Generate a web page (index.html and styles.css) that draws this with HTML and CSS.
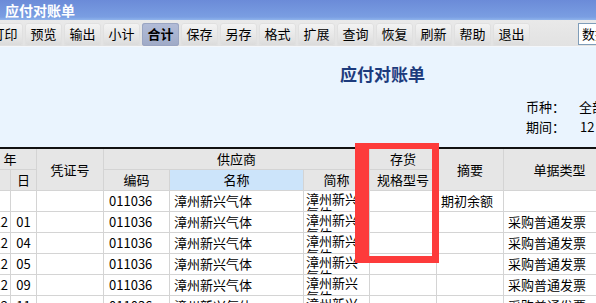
FILE: index.html
```html
<!DOCTYPE HTML>
<html>
<head>
	<title>应付对账单</title>
	<link rel="stylesheet" href="styles.css">
</head>
<body>
	<div class="titlebar">应付对账单</div>
	<div class="toolbar">
		<span class="tool first">打印</span>
		<span class="tool">预览</span>
		<span class="tool">输出</span>
		<span class="tool">小计</span>
		<span class="tool active">合计</span>
		<span class="tool">保存</span>
		<span class="tool">另存</span>
		<span class="tool">格式</span>
		<span class="tool">扩展</span>
		<span class="tool">查询</span>
		<span class="tool">恢复</span>
		<span class="tool">刷新</span>
		<span class="tool">帮助</span>
		<span class="tool">退出</span>
		<div class="search">数据权限</div>
	</div>
	<div class="report">
		<div class="report-head">
			<h1 class="report-title">应付对账单</h1>
			<dl class="meta">
				<dt>币种：</dt><dd>全部</dd>
				<dt>期间：</dt><dd class="num">12</dd>
			</dl>
		</div>
		<table class="grid">
			<colgroup>
				<col class="c-month"><col class="c-day"><col class="c-voucher"><col class="c-code">
				<col class="c-name"><col class="c-short"><col class="c-spec"><col class="c-summary"><col class="c-type">
			</colgroup>
			<thead>
				<tr>
					<th colspan="2">年</th>
					<th rowspan="2" class="tall">凭证号</th>
					<th colspan="3">供应商</th>
					<th>存货</th>
					<th rowspan="2" class="tall">摘要</th>
					<th rowspan="2" class="tall">单据类型</th>
				</tr>
				<tr>
					<th></th>
					<th>日</th>
					<th>编码</th>
					<th class="picked">名称</th>
					<th>简称</th>
					<th>规格型号</th>
				</tr>
			</thead>
			<tbody>
				<tr>
					<td></td><td></td><td></td>
					<td class="num">011036</td><td>漳州新兴气体</td>
					<td class="wrap"><div>漳州新兴气体</div></td>
					<td></td><td>期初余额</td><td></td>
				</tr>
				<tr>
					<td class="num month">12</td><td class="num day">01</td><td></td>
					<td class="num">011036</td><td>漳州新兴气体</td>
					<td class="wrap"><div>漳州新兴气体</div></td>
					<td></td><td></td><td>采购普通发票</td>
				</tr>
				<tr>
					<td class="num month">12</td><td class="num day">04</td><td></td>
					<td class="num">011036</td><td>漳州新兴气体</td>
					<td class="wrap"><div>漳州新兴气体</div></td>
					<td></td><td></td><td>采购普通发票</td>
				</tr>
				<tr>
					<td class="num month">12</td><td class="num day">05</td><td></td>
					<td class="num">011036</td><td>漳州新兴气体</td>
					<td class="wrap"><div>漳州新兴气体</div></td>
					<td></td><td></td><td>采购普通发票</td>
				</tr>
				<tr>
					<td class="num month">12</td><td class="num day">09</td><td></td>
					<td class="num">011036</td><td>漳州新兴气体</td>
					<td class="wrap"><div>漳州新兴气体</div></td>
					<td></td><td></td><td>采购普通发票</td>
				</tr>
				<tr>
					<td class="num month">12</td><td class="num day">11</td><td></td>
					<td class="num">011036</td><td>漳州新兴气体</td>
					<td class="wrap"><div>漳州新兴气体</div></td>
					<td></td><td></td><td>采购普通发票</td>
				</tr>
			</tbody>
		</table>
		<div class="mark"></div>
	</div>
</body>
</html>
```

FILE: styles.css
```css
*, *::after, *::before{
	box-sizing: border-box;
	margin: 0;
	padding: 0;
}
html, body{
	width: 100%;
	height: 100%;
}
body{
	overflow: hidden;
	background-color: #eaf4fe;
	font-family: "Noto Sans CJK SC", "Noto Sans", sans-serif;
	font-size: 13px;
	color: #000;
}

/* title bar */
.titlebar{
	height: 20px;
	padding-left: 5px;
	line-height: 20px;
	font-size: 14px;
	font-weight: bold;
	color: #fff;
	background: linear-gradient(#6b8bd8, #7a9ee2 85%, #8fb4ec);
}

/* toolbar */
.toolbar{
	display: flex;
	gap: 2px;
	height: 27px;
	padding-top: 3px;
	white-space: nowrap;
	background: linear-gradient(#e9e9e9, #e2e2e2);
	border-bottom: 1px solid #f4f7fb;
}
.tool{
	flex: none;
	width: 37px;
	height: 23px;
	line-height: 22px;
	text-align: center;
	border-radius: 3px;
	background: linear-gradient(#f4f4f4, #e6e6e6 60%, #dadada);
	box-shadow: inset 0 0 0 1px #e0e0e0;
}
.tool.first{margin-left: -14px;}
.tool.active{
	font-weight: bold;
	background: linear-gradient(#b2bcd8, #a7b2cf 60%, #9ea9c6);
	box-shadow: inset 0 0 0 1px #9aa5c2;
}
.search{
	flex: none;
	width: 90px;
	height: 22px;
	margin-left: 46px;
	padding-left: 3px;
	line-height: 20px;
	background-color: #fff;
	border: 1px solid #7f9db9;
}

/* report */
.report{
	position: relative;
}
.report-head{
	height: 100px;
	padding-top: 17px;
	overflow: hidden;
}
.report-title{
	height: 20px;
	padding-left: 340px;
	line-height: 20px;
	font-size: 17px;
	font-weight: bold;
	color: #1d3b7d;
}
.meta{
	display: grid;
	grid-template-columns: 53px max-content;
	width: 140px;
	margin: 13px 0 0 526px;
	line-height: 20px;
	white-space: nowrap;
}
.meta dd.num{padding-left: 1px;}

/* grid */
.grid{
	table-layout: fixed;
	border-collapse: collapse;
	width: 632px;
	margin-left: -17px;
	border-top: 2px solid #111;
}
.c-month{width: 27px;}
.c-day{width: 26px;}
.c-voucher{width: 67px;}
.c-code{width: 66px;}
.c-name{width: 134px;}
.c-short{width: 66px;}
.c-spec{width: 67px;}
.c-summary{width: 67px;}
.c-type{width: 112px;}
.grid th, .grid td{
	height: 21px;
	border: 1px solid #d4d4d4;
	white-space: nowrap;
	overflow: hidden;
}
.grid th{
	font-weight: normal;
	text-align: center;
	background-color: #e6e6e6;
}
.grid th.picked{background-color: #cce4fa;}
.grid td{
	padding: 0 0 0 4px;
	background-color: #fff;
	text-align: left;
}
.grid td.num{padding-left: 5px;}
.grid td.month{
	padding: 0 2px 0 0;
	text-align: right;
}
.grid td.day{
	padding: 0;
	text-align: center;
}
.grid td.wrap{
	padding-left: 2px;
	white-space: normal;
	vertical-align: top;
}
.wrap div{
	height: 20px;
	overflow: hidden;
	line-height: 14px;
	padding-top: 1px;
}

/* highlight box drawn over the grid */
.mark{
	position: absolute;
	left: 355px;
	top: 96px;
	width: 84px;
	height: 120px;
	border: 6px solid #fd3b3b;
	border-left-width: 14px;
	border-right-width: 7px;
	border-bottom-width: 7px;
}
```
